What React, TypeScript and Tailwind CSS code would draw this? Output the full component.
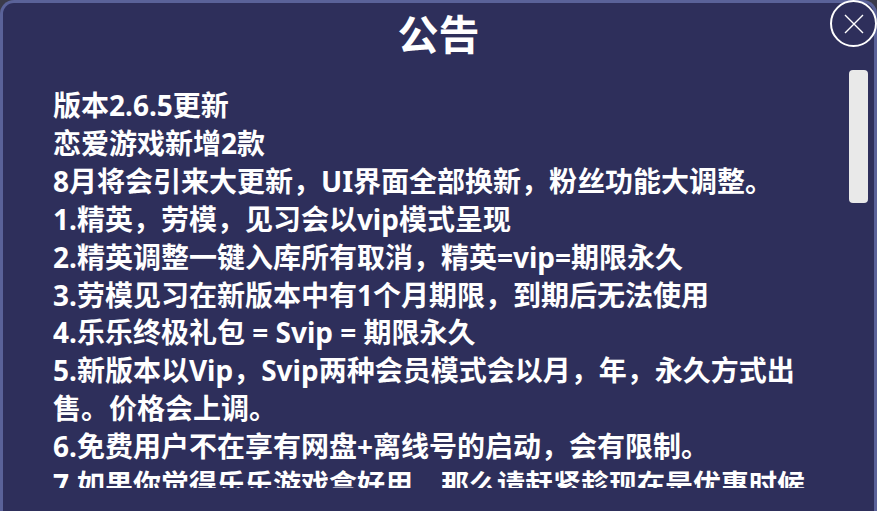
import React from 'react';

const LINES = [
  '版本2.6.5更新',
  '恋爱游戏新增2款',
  '8月将会引来大更新，UI界面全部换新，粉丝功能大调整。',
  '1.精英，劳模，见习会以vip模式呈现',
  '2.精英调整一键入库所有取消，精英=vip=期限永久',
  '3.劳模见习在新版本中有1个月期限，到期后无法使用',
  '4.乐乐终极礼包 = Svip = 期限永久',
  '5.新版本以Vip，Svip两种会员模式会以月，年，永久方式出售。价格会上调。',
  '6.免费用户不在享有网盘+离线号的启动，会有限制。',
  '7.如果你觉得乐乐游戏盒好用，那么请赶紧趁现在是优惠时候',
];

const App: React.FC = () => {
  return (
    <div className="w-[877px] h-[511px] overflow-hidden bg-[#3a3a4a]">
      <div
        className="relative flex flex-col h-[520px] rounded-tl-[14px] rounded-tr-[14px] border-[3px] border-b-0 border-[#5a6299] bg-[#2e2f5b] text-white"
        style={{ fontFamily: '"Noto Sans", "Noto Sans CJK SC", sans-serif' }}
      >
        <h1 className="mt-[9px] h-[44px] text-center text-[41px] leading-[44px] font-bold">公告</h1>

        <div className="flex mt-[14px] pl-[50px]">
          <div className="w-[760px] h-[418px] pt-[17px] overflow-hidden text-[28px] leading-[37.9px] font-bold">
            {LINES.map((line, i) => (
              <p key={i}>{line}</p>
            ))}
          </div>
          <div className="ml-[36px] w-[19px] h-[133px] rounded-[4px] bg-[#e9e9e9]" />
        </div>

        <button className="absolute top-[-3px] right-[-3px] w-[47px] h-[47px] flex items-center justify-center rounded-full border-2 border-white bg-[#2e2f5b]">
          <svg width="22" height="22" viewBox="0 0 22 22" fill="none" stroke="white" strokeWidth="1.4">
            <path d="M2 2 L20 20 M20 2 L2 20" />
          </svg>
        </button>
      </div>
    </div>
  );
};

export default App;
